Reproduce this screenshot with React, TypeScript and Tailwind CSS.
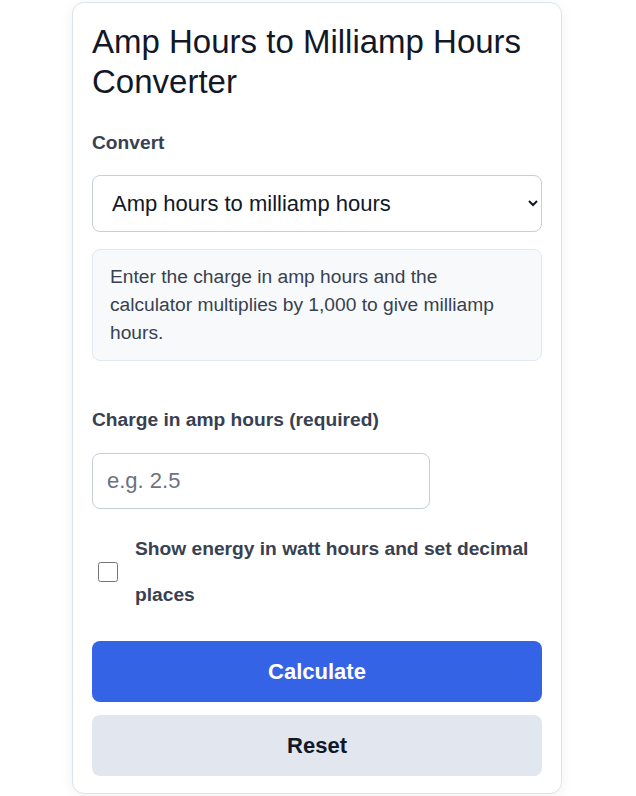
import { useState } from 'react';

export default function App() {
  const [mode, setMode] = useState('ah-mah');
  const [charge, setCharge] = useState('');
  const [showEnergy, setShowEnergy] = useState(false);

  return (
    <div className="min-h-[796px] bg-white pt-[2px] font-['Liberation_Sans',Arial,sans-serif]">
      <div className="ml-[72px] w-[490px] rounded-[12px] border border-[#dde3eb] bg-white px-[19px] pt-[19px] pb-[17px] shadow-[0_2px_14px_rgba(15,23,42,0.06)]">
        {/* Title */}
        <h1 className="text-[33px] leading-[40px] font-normal text-[#111827]">
          Amp Hours to Milliamp Hours Converter
        </h1>

        <label className="mt-[26px] block text-[19.2px] leading-[29px] font-bold text-[#374151]">Convert</label>
        <select
          value={mode}
          onChange={(e) => setMode(e.target.value)}
          className="mt-[18px] block h-[57px] w-full rounded-[8px] border border-[#c5ced9] bg-white pl-[15px] pr-[12px] text-[22px] text-[#111827] outline-none"
        >
          <option value="ah-mah">Amp hours to milliamp hours</option>
          <option value="mah-ah">Milliamp hours to amp hours</option>
        </select>

        <div className="mt-[17px] rounded-[8px] border border-[#e2e8f0] bg-[#f8f9fb] py-[13px] pl-[17px] pr-[20px] text-[19.2px] leading-[28px] text-[#374151]">
          Enter the charge in amp hours and the calculator multiplies by 1,000 to give milliamp hours.
        </div>

        <label className="mt-[44px] block text-[19.2px] leading-[29px] font-bold text-[#374151]">
          Charge in amp hours (required)
        </label>
        <input
          type="text"
          value={charge}
          onChange={(e) => setCharge(e.target.value)}
          placeholder="e.g. 2.5"
          className="mt-[19px] block h-[56px] w-[75%] rounded-[8px] border border-[#c5ced9] bg-white px-[14px] text-[22px] text-[#111827] outline-none placeholder:text-[#6b7280]"
        />

        <div className="mt-[17px] flex items-center">
          <input
            type="checkbox"
            checked={showEnergy}
            onChange={(e) => setShowEnergy(e.target.checked)}
            className="ml-[6px] h-[20px] w-[20px] shrink-0"
          />
          <span className="ml-[17px] text-[19.2px] leading-[46px] font-bold text-[#374151]">
            Show energy in watt hours and set decimal places
          </span>
        </div>

        <button className="mt-[23px] block h-[61px] w-full rounded-[8px] bg-[#3563e6] text-[22px] font-bold text-white">
          Calculate
        </button>
        <button className="mt-[13px] block h-[61px] w-full rounded-[8px] bg-[#e2e6ee] text-[22px] font-bold text-[#111827]">
          Reset
        </button>
      </div>
    </div>
  );
}
